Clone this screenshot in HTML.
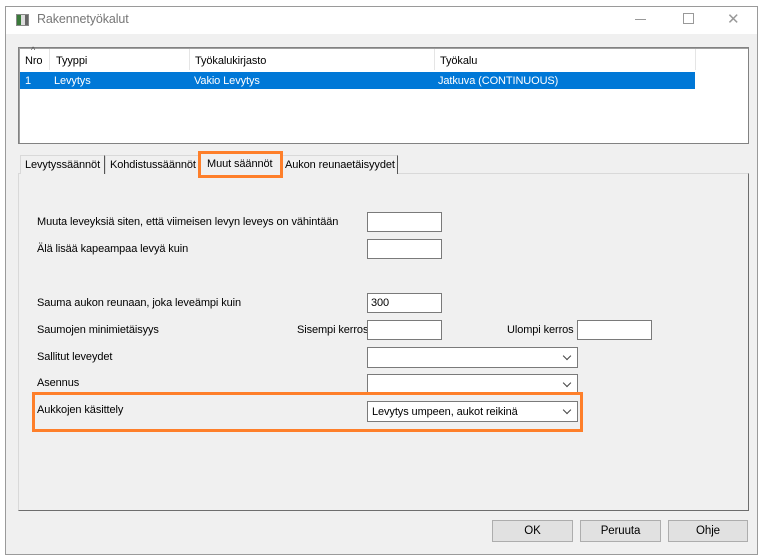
<!DOCTYPE html>
<html><head><meta charset="utf-8"><style>
*{box-sizing:border-box;margin:0;padding:0}
body{width:762px;height:557px;background:#fff;font-family:"Liberation Sans",sans-serif;font-size:11px;color:#000;position:relative;overflow:hidden;letter-spacing:-0.1px;white-space:nowrap}
.a{position:absolute}
.win{left:5px;top:6px;width:753px;height:549px;border:1px solid #9a9a9a;background:#f0f0f0}
.tb{left:6px;top:7px;width:751px;height:27px;background:#fff}
.in{position:absolute;background:#fff;border:1px solid #7a7a7a;height:20px;padding:3px 3px}
.cb{position:absolute;background:#fff;border:1px solid #7a7a7a;height:21px;width:211px;left:367px;padding:4px 4px}
.cb:after{content:"";position:absolute;right:7px;top:5px;width:5px;height:5px;border-right:1px solid #444;border-bottom:1px solid #444;transform:rotate(45deg)}
.lb{position:absolute;left:37px}
.btn{position:absolute;top:520px;height:22px;width:81px;background:#e1e1e1;border:1px solid #adadad;text-align:center;line-height:20px;font-size:11.5px}
.tab{position:absolute;top:155px;height:19px;border:1px solid #d9d9d9;border-bottom:none;border-right:1px solid #555;background:#f0f0f0;padding:3px 4px}
</style></head><body>
<div class="a win"></div>
<div class="a tb"></div>
<div class="a" style="left:16px;top:14px;width:13px;height:12px;border:1px solid #888;background:linear-gradient(90deg,#3a7a3a 0 4px,#ddd 4px 8px,#666 8px)"></div>
<div class="a" style="left:37px;top:12px;color:#777;font-size:12.5px">Rakennetyökalut</div>
<div class="a" style="left:635px;top:19px;width:11px;height:1px;background:#999"></div>
<div class="a" style="left:683px;top:13px;width:11px;height:11px;border:1px solid #999"></div>
<div class="a" style="left:727px;top:10px;font-size:15px;color:#999">✕</div>

<div class="a" style="left:18px;top:47px;width:731px;height:97px;border:1px solid #828282;background:#fff;box-shadow:inset 1px 1px 0 #a0a0a0"></div>
<div class="a" style="left:49px;top:49px;width:1px;height:21px;background:#e5e5e5"></div>
<div class="a" style="left:189px;top:49px;width:1px;height:21px;background:#e5e5e5"></div>
<div class="a" style="left:434px;top:49px;width:1px;height:21px;background:#e5e5e5"></div>
<div class="a" style="left:695px;top:49px;width:1px;height:21px;background:#e5e5e5"></div>
<div class="a" style="left:31px;top:45px;font-size:9px;color:#555">^</div>
<div class="a" style="left:25px;top:55px">Nro</div>
<div class="a" style="left:56px;top:55px">Tyyppi</div>
<div class="a" style="left:195px;top:55px">Työkalukirjasto</div>
<div class="a" style="left:440px;top:55px">Työkalu</div>
<div class="a" style="left:20px;top:72px;width:675px;height:17px;background:#0078d7"></div>
<div class="a" style="left:25px;top:75px;color:#fff">1</div>
<div class="a" style="left:54px;top:75px;color:#fff">Levytys</div>
<div class="a" style="left:194px;top:75px;color:#fff">Vakio Levytys</div>
<div class="a" style="left:438px;top:75px;color:#fff">Jatkuva (CONTINUOUS)</div>

<div class="a" style="left:18px;top:173px;width:731px;height:338px;border:1px solid #d9d9d9;border-right-color:#6d6d6d;border-bottom-color:#6d6d6d"></div>
<div class="tab" style="left:20px;width:85px">Levytyssäännöt</div>
<div class="tab" style="left:105px;width:94px">Kohdistussäännöt</div>
<div class="tab" style="left:280px;width:118px">Aukon reunaetäisyydet</div>
<div class="a" style="left:198px;top:151px;width:85px;height:27px;border:3px solid #fe7f2a;background:#f0f0f0;padding:4px 6px">Muut säännöt</div>

<div class="lb" style="top:216px">Muuta leveyksiä siten, että viimeisen levyn leveys on vähintään</div>
<div class="in" style="left:367px;top:212px;width:75px"></div>
<div class="lb" style="top:243px">Älä lisää kapeampaa levyä kuin</div>
<div class="in" style="left:367px;top:239px;width:75px"></div>
<div class="lb" style="top:297px">Sauma aukon reunaan, joka leveämpi kuin</div>
<div class="in" style="left:367px;top:293px;width:75px">300</div>
<div class="lb" style="top:324px">Saumojen minimietäisyys</div>
<div class="a" style="left:297px;top:324px">Sisempi kerros</div>
<div class="in" style="left:367px;top:320px;width:75px"></div>
<div class="a" style="left:507px;top:324px">Ulompi kerros</div>
<div class="in" style="left:577px;top:320px;width:75px"></div>
<div class="lb" style="top:351px">Sallitut leveydet</div>
<div class="cb" style="top:347px"></div>
<div class="lb" style="top:377px">Asennus</div>
<div class="cb" style="top:374px"></div>
<div class="a" style="left:32px;top:392px;width:551px;height:40px;border:3px solid #fe7f2a"></div>
<div class="lb" style="top:404px">Aukkojen käsittely</div>
<div class="cb" style="top:401px">Levytys umpeen, aukot reikinä</div>

<div class="btn" style="left:492px">OK</div>
<div class="btn" style="left:580px">Peruuta</div>
<div class="btn" style="left:668px;width:80px">Ohje</div>
</body></html>
